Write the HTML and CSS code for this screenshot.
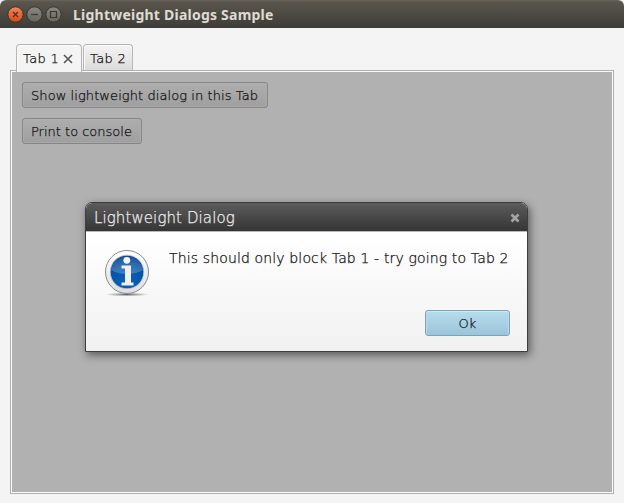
FILE: index.html
```html
<!DOCTYPE html>
<html lang="en">
<head>
<meta charset="utf-8">
<title>Lightweight Dialogs Sample</title>
<link rel="stylesheet" href="styles.css">
</head>
<body>
<header class="titlebar">
  <svg class="controls" width="60" height="20" viewBox="0 0 60 20">
    <defs>
      <linearGradient id="red" x1="0" y1="0" x2="0" y2="1"><stop offset="0" stop-color="#f4855c"/><stop offset="1" stop-color="#dd4814"/></linearGradient>
      <linearGradient id="grey" x1="0" y1="0" x2="0" y2="1"><stop offset="0" stop-color="#8b897f"/><stop offset="1" stop-color="#66645c"/></linearGradient>
    </defs>
    <g stroke="#35342f" stroke-width="1">
      <circle cx="10.5" cy="10.5" r="7.7" fill="url(#red)"/>
      <circle cx="29.5" cy="10.5" r="7.7" fill="url(#grey)"/>
      <circle cx="48.5" cy="10.5" r="7.7" fill="url(#grey)"/>
    </g>
    <g fill="none" stroke="#3a3530" stroke-width="1.2">
      <path d="M8 8l5 5M13 8l-5 5"/>
      <path d="M26 10.5h7"/>
      <path d="M45.5 7.5h6v6h-6z"/>
    </g>
  </svg>
  <h1 class="title">Lightweight Dialogs Sample</h1>
</header>
<main class="content">
  <nav class="tabs">
    <div class="tab active"><span>Tab 1</span><svg class="tab-close" width="10" height="10" viewBox="0 0 10 10"><path d="M1 1l8 8M9 1l-8 8" stroke="#555" stroke-width="1.6"/></svg></div>
    <div class="tab"><span>Tab 2</span></div>
  </nav>
  <section class="pane">
    <div class="button wide"><span>Show lightweight dialog in this Tab</span></div>
    <div class="button print"><span>Print to console</span></div>
    <div class="dialog">
      <div class="dialog-head"><span>Lightweight Dialog</span>
        <svg width="10" height="10" viewBox="0 0 10 10"><path d="M1.5 1.5l7 7M8.5 1.5l-7 7" stroke="#a5a5a5" stroke-width="2.6"/></svg>
      </div>
      <div class="dialog-body">
        <svg class="info" width="48" height="50" viewBox="0 0 48 50">
          <defs>
            <linearGradient id="ring" x1="0" y1="0" x2="0" y2="1"><stop offset="0" stop-color="#fff"/><stop offset="1" stop-color="#ddd"/></linearGradient>
            <radialGradient id="blue" cx=".5" cy=".8" r=".8"><stop offset="0" stop-color="#0763bd"/><stop offset=".65" stop-color="#0753a5"/><stop offset="1" stop-color="#063e88"/></radialGradient>
            <linearGradient id="gloss" x1="0" y1="0" x2="0" y2="1"><stop offset="0" stop-color="#fff" stop-opacity=".1"/><stop offset="1" stop-color="#fff" stop-opacity=".22"/></linearGradient>
            <radialGradient id="shade"><stop offset="0" stop-color="#555" stop-opacity=".9"/><stop offset="1" stop-color="#777" stop-opacity="0"/></radialGradient>
          </defs>
          <ellipse cx="23" cy="44.5" rx="22" ry="2" fill="url(#shade)"/>
          <circle cx="23" cy="22" r="21.5" fill="url(#ring)" stroke="#8c8c8c"/>
          <circle cx="23" cy="22" r="16.8" fill="url(#blue)" stroke="#c8cdd4" stroke-width=".8"/>
          <path d="M7 20a16.2 16.2 0 0 1 32 0q-7 4-16 4t-16-4z" fill="url(#gloss)"/>
          <circle cx="22.8" cy="10.3" r="3.4" fill="#f4f4f4"/>
          <path d="M17.5 15.500h9.500V32.500h2.500v3H17.500v-3H21V18.500h-3.500z" fill="#f0f0f0"/>
        </svg>
        <p class="message">This should only block Tab 1 - try going to Tab 2</p>
        <div class="ok"><span>Ok</span></div>
      </div>
    </div>
  </section>
</main>
</body>
</html>
```
FILE: styles.css
```css
* { box-sizing: border-box; }
body {
  margin: 0;
  width: 624px;
  height: 503px;
  overflow: hidden;
  background: #f4f4f4;
  font: 200 13px/16px "DejaVu Sans", "DejaVu Sans Light", sans-serif;
  color: #111;
  white-space: nowrap;
  -webkit-text-stroke: .25px currentColor;
}
svg { display: block; flex: none; }
.titlebar {
  display: flex;
  align-items: center;
  height: 28px;
  padding-left: 5px;
  background: linear-gradient(#686459 0, #5a564d 2px, #3d3c37 100%);
  border-radius: 6px 6px 0 0;
}
.controls { margin-top: -1px; }
.title {
  margin: 1px 0 0 8px;
  font: bold 14px/20px "Noto Sans", sans-serif;
  letter-spacing: .23px;
  color: #dfdbd2;
  -webkit-text-stroke: 0;
}
.content { padding: 16px 10px 0; }
.tabs { display: flex; gap: 1px; padding-left: 6px; height: 26px; }
.tab {
  display: flex;
  width: 50px;
  height: 26px;
  padding: 6px 0 0 6px;
  border: 1px solid #b5b5b5;
  border-bottom: 0;
  border-radius: 4px 4px 0 0;
  background: linear-gradient(#f4f4f4, #dcdcdc);
  box-shadow: inset 0 1px #fff, inset 1px 0 #fafafa;
  letter-spacing: .35px;
}
.tab.active {
  position: relative;
  width: 66px;
  height: 28px;
  background: #f4f4f4;
}
.tab-close { margin: 3px 0 0 4px; }
.pane {
  display: flex;
  flex-direction: column;
  align-items: flex-start;
  height: 424px;
  padding: 10px;
  border: 1px solid #b0b0b0;
  box-shadow: inset 0 0 0 1px #fafafa;
  background: #b1b1b1;
}
.button {
  height: 26px;
  margin: 1px 0 9px 1px;
  padding: 5px 0 0 8px;
  border: 1px solid #858585;
  border-radius: 3px;
  background: linear-gradient(#aeaeae, #9f9f9f);
  box-shadow: inset 0 0 0 1px rgba(176, 176, 176, .6);
}
.wide { width: 246px; letter-spacing: .08px; }
.print { width: 120px; }
.dialog {
  width: 443px;
  height: 150px;
  margin: 49px 0 0 64px;
  border: 1px solid #3d3d3d;
  border-radius: 7px 7px 0 0;
  background: linear-gradient(#fff 30px, #f1f1f1);
  box-shadow: 2px 3px 8px rgba(0, 0, 0, .5);
}
.dialog-head {
  display: flex;
  align-items: center;
  justify-content: space-between;
  height: 28px;
  padding: 1px 7px 0 8px;
  border-radius: 6px 6px 0 0;
  background: linear-gradient(#5c5c5c, #353535);
  font-size: 15px;
  letter-spacing: .1px;
  color: #eee;
}
.dialog-body {
  display: grid;
  grid-template-columns: 65px 1fr;
  grid-template-rows: 60px 26px;
  padding: 18px 17px 0 18px;
  border-top: 1px solid #bbb;
}
.message {
  margin: -1px 0 0;
  font-size: 14px;
  line-height: 18px;
  letter-spacing: .14px;
}
.ok {
  grid-column: 2;
  justify-self: end;
  width: 85px;
  height: 26px;
  padding-top: 5px;
  border: 1px solid #7ba3b7;
  border-radius: 3px;
  background: linear-gradient(#b6dcec, #9cc4da);
  box-shadow: inset 0 1px #cce9f4, inset 1px 0 #b9dceb, inset -1px 0 #b9dceb;
  text-align: center;
}
```
